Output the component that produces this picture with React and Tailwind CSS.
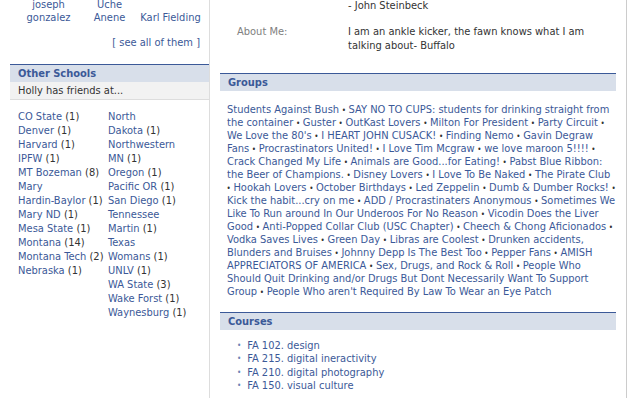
// group lines as they wrap on the profile page
const groupLines = [
  'Students Against Bush • SAY NO TO CUPS: students for drinking straight from',
  'the container • Guster • OutKast Lovers • Milton For President • Party Circuit •',
  "We Love the 80's • I HEART JOHN CUSACK! • Finding Nemo • Gavin Degraw",
  'Fans • Procrastinators United! • I Love Tim Mcgraw • we love maroon 5!!!! •',
  'Crack Changed My Life • Animals are Good...for Eating! • Pabst Blue Ribbon:',
  'the Beer of Champions. • Disney Lovers • I Love To Be Naked • The Pirate Club',
  '• Hookah Lovers • October Birthdays • Led Zeppelin • Dumb & Dumber Rocks! •',
  'Kick the habit...cry on me • ADD / Procrastinaters Anonymous • Sometimes We',
  'Like To Run around In Our Underoos For No Reason • Vicodin Does the Liver',
  'Good • Anti-Popped Collar Club (USC Chapter) • Cheech & Chong Aficionados •',
  'Vodka Saves Lives • Green Day • Libras are Coolest • Drunken accidents,',
  'Blunders and Bruises • Johnny Depp Is The Best Too • Pepper Fans • AMISH',
  'APPRECIATORS OF AMERICA • Sex, Drugs, and Rock & Roll • People Who',
  'Should Quit Drinking and/or Drugs But Dont Necessarily Want To Support',
  "Group • People Who aren't Required By Law To Wear an Eye Patch",
];

const schoolsA = [
  ['CO State', 1], ['Denver', 1], ['Harvard', 1], ['IPFW', 1], ['MT Bozeman', 8], ['Mary Hardin-Baylor', 1],
  ['Mary ND', 1], ['Mesa State', 1], ['Montana', 14], ['Montana Tech', 2], ['Nebraska', 1],
];
const schoolsB = [
  ['North Dakota', 1], ['Northwestern MN', 1], ['Oregon', 1], ['Pacific OR', 1], ['San Diego', 1],
  ['Tennessee Martin', 1], ['Texas Womans', 1], ['UNLV', 1], ['WA State', 3], ['Wake Forst', 1], ['Waynesburg', 1],
];

const courses = ['FA 102. design', 'FA 215. digital ineractivity', 'FA 210. digital photography', 'FA 150. visual culture'];

const friends = [
  ['joseph', 'gonzalez'],
  ['Uche', 'Anene'],
  ['', 'Karl Fielding'],
];

function Header({ children }) {
  return (
    <div className="border-t border-[#3b5998] bg-[#d8dfea] h-[18px] pl-2 text-[11px] font-bold leading-[17px] text-[#3b5998]">
      {children}
    </div>
  );
}

function SchoolList({ items, width }) {
  return (
    <ul className={width}>
      {items.map(([name, n]) => {
        const words = name.split(' ');
        const last = words.pop();
        return (
          <li key={name}>
            {words.length > 0 && <span className="text-[#3b5998]">{words.join(' ')} </span>}
            <span className="whitespace-nowrap">
              <span className="text-[#3b5998]">{last}</span> <span className="text-[#333]">({n})</span>
            </span>
          </li>
        );
      })}
    </ul>
  );
}

function GroupLine({ text }) {
  const parts = text.split('•');
  return (
    <div className="h-[13px] whitespace-nowrap">
      {parts.map((p, i) => (
        <span key={i}>
          {i > 0 && <span className="mx-[-0.5px] text-[8px] leading-none text-[#333]">•</span>}
          {p}
        </span>
      ))}
    </div>
  );
}

export default function App() {
  return (
    <div
      className="flex w-[627px] h-[398px] overflow-hidden border-r border-[#ccc] bg-white text-[11px] text-[#333]"
      style={{ fontFamily: '"DejaVu Sans Condensed", "DejaVu Sans", sans-serif' }}
    >
      {/* left column */}
      <div className="w-[210px] shrink-0 border-r border-[#ddd] pl-[10px]">
        <div className="flex pl-[8px] text-center leading-[13px] text-[#3b5998] -mt-[2px]">
          {friends.map(([a, b]) => (
            <div key={b} className="w-[61px]">
              {a || '\u00a0'}
              <br />
              {b}
            </div>
          ))}
        </div>
        <div className="mt-[11px] pr-[9px] text-right text-[#3b5998]">[ see all of them ]</div>
        <div className="mt-[12px]">
          <Header>Other Schools</Header>
          <div className="h-[18px] border-b border-[#ddd] bg-[#f2f2f2] pl-[8px] leading-[17px]">Holly has friends at...</div>
        </div>
        <div className="flex pl-[8px] pt-[10px] leading-[14px]">
          <SchoolList items={schoolsA} width="w-[90px]" />
          <SchoolList items={schoolsB} width="w-[80px]" />
        </div>
      </div>

      {/* right column */}
      <div className="w-[396px] ml-[10px]">
        <div className="flex leading-[14px] -mt-[1px]">
          <div className="w-[128px]"></div>
          <div>- John Steinbeck</div>
        </div>
        <div className="mt-[12px] flex leading-[14px]">
          <div className="w-[128px] pl-[17px] text-[#808080]">About Me:</div>
          <div className="w-[260px]">I am an ankle kicker, the fawn knows what I am talking about- Buffalo</div>
        </div>
        <div className="mt-[20px]">
          <Header>Groups</Header>
        </div>
        <div className="pl-[7px] pt-[12px] leading-[13px] text-[#3b5998]">
          {groupLines.map((l) => (
            <GroupLine key={l} text={l} />
          ))}
        </div>
        <div className="mt-[14px]">
          <Header>Courses</Header>
        </div>
        <ul className="pl-[17px] pt-[9px] leading-[13.4px] text-[#3b5998]">
          {courses.map((c) => (
            <li key={c} className="flex items-center">
              <span className="mr-[6px] text-[8px] text-[#6d84b4]">•</span>
              {c}
            </li>
          ))}
        </ul>
      </div>
    </div>
  );
}
